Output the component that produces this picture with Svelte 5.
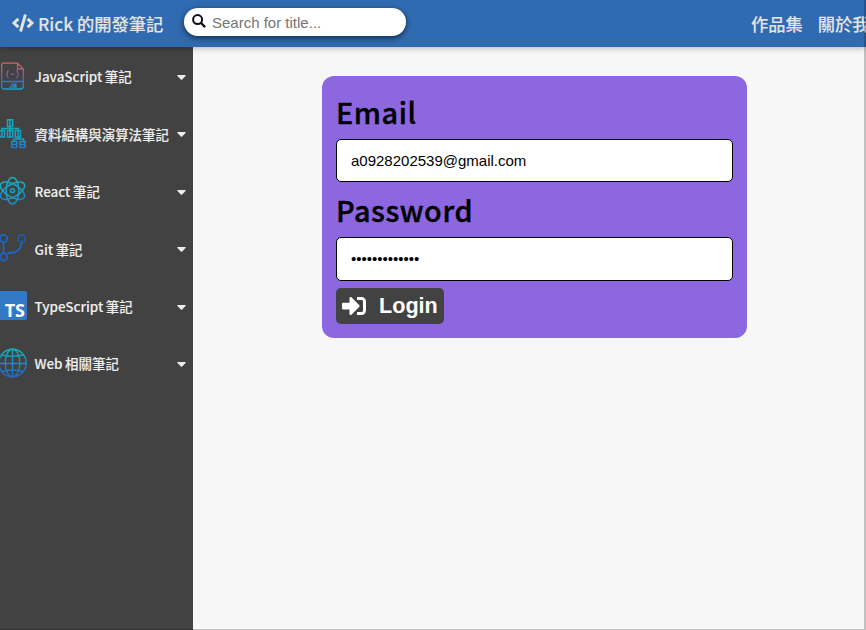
<script>
  const notes = [
    { icon: 'js', label: 'JavaScript 筆記' },
    { icon: 'tree', label: '資料結構與演算法筆記' },
    { icon: 'react', label: 'React 筆記' },
    { icon: 'git', label: 'Git 筆記' },
    { icon: 'ts', label: 'TypeScript 筆記' },
    { icon: 'web', label: 'Web 相關筆記' }
  ];
  let email = $state('a0928202539@gmail.com');
  let password = $state('notebook12345');
  let query = $state('');
</script>

<div class="page">
  <header>
    <a class="brand" href="#home">
      <svg width="22" height="18" viewBox="0 0 640 512" fill="currentColor"><path d="M278.900 511.500l-61-17.700c-6.400-1.800-10-8.500-8.200-14.900L346.200 8.700c1.800-6.400 8.500-10 14.900-8.200l61 17.700c6.400 1.800 10 8.500 8.200 14.900L293.800 503.300c-1.900 6.400-8.500 10.100-14.900 8.200zm-114-112.200l43.500-46.400c4.600-4.900 4.300-12.700-.8-17.200L117 256l90.600-79.700c5.100-4.500 5.500-12.300.8-17.200l-43.500-46.400c-4.500-4.800-12.100-5.100-17-.5L3.800 247.200c-5.100 4.700-5.100 12.800 0 17.500l144.100 135.100c4.900 4.600 12.500 4.400 17-.5zm327.200.6l144.100-135.100c5.100-4.700 5.100-12.800 0-17.500L492.100 112.100c-4.800-4.500-12.400-4.300-17 .5L431.600 159c-4.600 4.900-4.300 12.700.8 17.200L523 256l-90.600 79.700c-5.100 4.500-5.500 12.300-.8 17.200l43.500 46.400c4.500 4.900 12.100 5.100 17 .6z" /></svg>
      <span>Rick 的開發筆記</span>
    </a>
    <label class="search">
      <svg width="14" height="14" viewBox="0 0 14 14" fill="none" stroke="#120d1c"><circle cx="5.600" cy="5.600" r="4.500" stroke-width="2" /><path d="M9 9L13.100 13.100" stroke-width="2.400" /></svg>
      <input placeholder="Search for title..." bind:value={query} />
    </label>
    <nav><a href="#works">作品集</a><a href="#about">關於我</a></nav>
  </header>
  <div class="body">
    <aside>
      {#each notes as note}
        <button class="note">
          <span class="icon">
            {#if note.icon === 'js'}
              <svg width="28" height="30" viewBox="0 0 28 30" fill="none" stroke="url(#gjs)" stroke-width="1.300">
                <defs><linearGradient id="gjs" gradientUnits="userSpaceOnUse" x1="0" y1="1" x2="0" y2="29"><stop stop-color="#d9655c" /><stop offset=".5" stop-color="#8057b5" /><stop offset=".72" stop-color="#3d70c8" /><stop offset="1" stop-color="#16a8c0" /></linearGradient></defs>
                <path d="M3 2.200H17.500L23.300 8V25Q23.300 28 20.500 28H4.500Q1.700 28 1.700 25V4.500Q1.700 2.200 3 2.200ZM17.500 2.500V8H23M1.700 20.500H23.300" />
                <path stroke-width="1.100" d="M9 9.500Q7.300 9.500 7.500 11.500Q7.600 12.900 6.200 13.200Q7.600 13.500 7.500 14.900Q7.300 17 9 17M16 9.500Q17.700 9.500 17.500 11.500Q17.400 12.900 18.800 13.200Q17.400 13.500 17.500 14.900Q17.700 17 16 17" />
                <path stroke="#8057b5" d="M10.800 13.200H14.200" />
                <path d="M12 22.500V25Q12 26.300 9.500 26M16.500 22.800H14V24.300H16V26H13" />
              </svg>
            {:else if note.icon === 'tree'}
              <svg width="28" height="30" viewBox="0 0 28 30" fill="none" stroke="url(#gtr)" stroke-width="1.500">
                <defs><linearGradient id="gtr" gradientUnits="userSpaceOnUse" x1="0" y1="1" x2="0" y2="29"><stop stop-color="#18a9bb" /><stop offset=".65" stop-color="#189fc4" /><stop offset="1" stop-color="#2174ce" /></linearGradient></defs>
                <path d="M7.500 .7H12.700V7.500H7.500ZM10 .7V7.500M10 8V11M2 10.500V9.500H18.500V10.500M-.5 11.500H4.500V18H-.5ZM7.500 11.500H12.700V18H7.500ZM15.300 11.500H20.500V18H15.300ZM2 11.500V18M10 11.500V18M18 11.500V18M18.500 18V20.500M14 22V20H23.500V22M11.700 22.500H16.800V28.500H11.700ZM20 22.500H25.200V28.500H20ZM11.700 25.500H16.800M20 25.500H25.200" />
              </svg>
            {:else if note.icon === 'react'}
              <svg width="28" height="30" viewBox="0 0 28 30" fill="none" stroke="url(#gre)" stroke-width="1.500">
                <defs><linearGradient id="gre" gradientUnits="userSpaceOnUse" x1="-14" y1="1" x2="-14" y2="29"><stop stop-color="#17adb9" /><stop offset=".6" stop-color="#1a9dbf" /><stop offset="1" stop-color="#1a84c8" /></linearGradient></defs>
                <ellipse cx="12.500" cy="14.700" rx="6.300" ry="13.300" /><ellipse cx="12.500" cy="14.700" rx="6.300" ry="13.500" transform="rotate(60 12.500 14.700)" /><ellipse cx="12.500" cy="14.700" rx="6.300" ry="13.500" transform="rotate(-60 12.500 14.700)" /><circle cx="12.500" cy="14.700" r="1.900" />
              </svg>
            {:else if note.icon === 'git'}
              <svg width="28" height="30" viewBox="0 0 28 30" fill="none" stroke="#1d66c6" stroke-width="1.800">
                <circle cx="3.500" cy="4.500" r="3.700" /><circle cx="21.500" cy="4.500" r="3.700" stroke="#2259a0" /><circle cx="3.500" cy="23" r="3.700" /><path d="M3.500 8.500V19.500M7.500 19H10Q20.500 19 21.500 8.500" />
              </svg>
            {:else if note.icon === 'ts'}
              <span class="ts">TS</span>
            {:else}
              <svg width="28" height="30" viewBox="0 0 28 30" fill="none" stroke="url(#gwe)" stroke-width="1.400">
                <defs><linearGradient id="gwe" gradientUnits="userSpaceOnUse" x1="0" y1="1" x2="0" y2="29"><stop stop-color="#17adb9" /><stop offset=".5" stop-color="#198cc0" /><stop offset="1" stop-color="#2068cc" /></linearGradient></defs>
                <circle cx="12.500" cy="15" r="13.700" /><ellipse cx="12.500" cy="15" rx="7.300" ry="13.700" /><path d="M12.500 1.300V28.700M-1 15.500H26M2 7Q12.500 9.500 23 7M2 23.500Q12.500 20.500 23 23.500" />
              </svg>
            {/if}
          </span>
          <span class="label">{note.label}</span>
          <svg class="caret" width="9" height="5" viewBox="0 0 9 5"><path d="M.8 0H8.200Q9.200 .2 8.500 1L5.200 4.500Q4.500 5.200 3.800 4.500L.5 1Q-.2 .2 .8 0Z" fill="#eee" /></svg>
        </button>
      {/each}
    </aside>
    <main>
      <form onsubmit={(e) => e.preventDefault()}>
        <label class="field"><span>Email</span><input type="email" bind:value={email} /></label>
        <label class="field tall"><span>Password</span><input type="password" bind:value={password} /></label>
        <button class="login">
          <svg width="24" height="24" viewBox="0 0 512 512" fill="#fff"><path d="M416 448h-84c-6.600 0-12-5.400-12-12v-40c0-6.600 5.400-12 12-12h84c17.700 0 32-14.300 32-32V160c0-17.700-14.300-32-32-32h-84c-6.600 0-12-5.400-12-12V76c0-6.600 5.400-12 12-12h84c53 0 96 43 96 96v192c0 53-43 96-96 96zm-47-209L201 71c-15-15-41-4.500-41 17v96H24c-13.300 0-24 10.700-24 24v96c0 13.300 10.700 24 24 24h136v96c0 21.500 26 32 41 17l168-168c9.300-9.400 9.300-24.600 0-34z" /></svg>
          <span>Login</span>
        </button>
      </form>
    </main>
  </div>
  <div class="frame"></div>
</div>

<style>
  :global(body) { overflow: hidden; }
  .page { position: relative; display: flex; flex-direction: column; width: 866px; height: 630px; overflow: hidden; background: #f7f7f7; font-family: "Noto Sans CJK TC", sans-serif; }
  .page * { box-sizing: border-box; }
  header { display: flex; align-items: center; flex: none; height: 47px; padding-left: 12px; background: #306bb1; box-shadow: 0 1px 6px rgba(0, 0, 0, .3); z-index: 1; }
  a { color: #e3e3e3; text-decoration: none; white-space: nowrap; -webkit-text-stroke: .1px #e3e3e3; }
  .brand { display: flex; flex: none; align-items: center; gap: 4px; width: 172px; padding-bottom: 1px; font-size: 17.280px; font-weight: 500; }
  .search { display: flex; flex: none; align-items: flex-start; width: 222px; height: 28px; margin-bottom: 3px; padding: 6px 8px; border-radius: 14px; background: #fff; box-shadow: 0 2px 6px rgba(0, 0, 0, .6); }
  .search svg { flex: none; }
  .search input { width: 180px; height: 17px; margin-left: 6px; padding: 0; border: 0; outline: 0; font: 15px/17px "Liberation Sans", sans-serif; background: none; }
  .search input::placeholder { color: #757575; }
  nav { display: flex; flex: none; gap: 15px; margin-left: 345px; padding-bottom: 1px; font-size: 17.280px; font-weight: 500; }
  .body { display: flex; flex: 1; min-height: 0; }
  aside { width: 193px; flex: none; padding-top: .5px; background: #424242; }
  .note { display: flex; align-items: center; width: 100%; height: 57.450px; padding: 0 7px 0 0; border: 0; background: none; font: 500 13.440px "Noto Sans CJK TC", sans-serif; color: #eee; text-align: left; }
  .icon { display: flex; width: 34.500px; flex: none; }
  .ts { display: flex; justify-content: flex-end; align-items: flex-end; width: 27px; height: 29px; padding-right: 2px; border-radius: 0 2px 2px 0; background: #3178c6; color: #fff; font: 700 18px/20px "Open Sans", sans-serif; letter-spacing: 0; }
  .label { flex: 1; white-space: nowrap; word-spacing: -.500px; -webkit-text-stroke: .1px #eee; }
  .caret { flex: none; margin-top: 2.500px; }
  main { flex: 1; padding: 29px 0 0 129px; }
  form { width: 425px; height: 262px; padding: 14px; border-radius: 12px; background: #8c67df; }
  .field { display: flex; flex-direction: column; height: 98px; }
  .field span { height: 49px; font-size: 28.800px; line-height: 43px; font-weight: 500; letter-spacing: .570px; -webkit-text-stroke: .4px #000; color: #000; }
  .field input { width: 397px; height: 43px; padding: 0 14px; border: 1px solid #000; border-radius: 5px; outline: 0; background: #fff; color: #000; font: 15px "Liberation Sans", sans-serif; }
  .tall input { height: 44px; padding-bottom: 1px; }
  .login { display: flex; align-items: center; width: 108px; height: 36px; margin-top: 2px; padding: 0 6px; gap: 13px; border: 0; border-radius: 5px; background: #424242; color: #fff; font: 700 21.600px "Liberation Sans", sans-serif; }
  .login svg { flex: none; }
  .frame { position: absolute; inset: 0; z-index: 2; pointer-events: none; border-right: 2px solid rgba(0, 0, 0, .22); border-bottom: 1px solid rgba(0, 0, 0, .22); }
</style>
